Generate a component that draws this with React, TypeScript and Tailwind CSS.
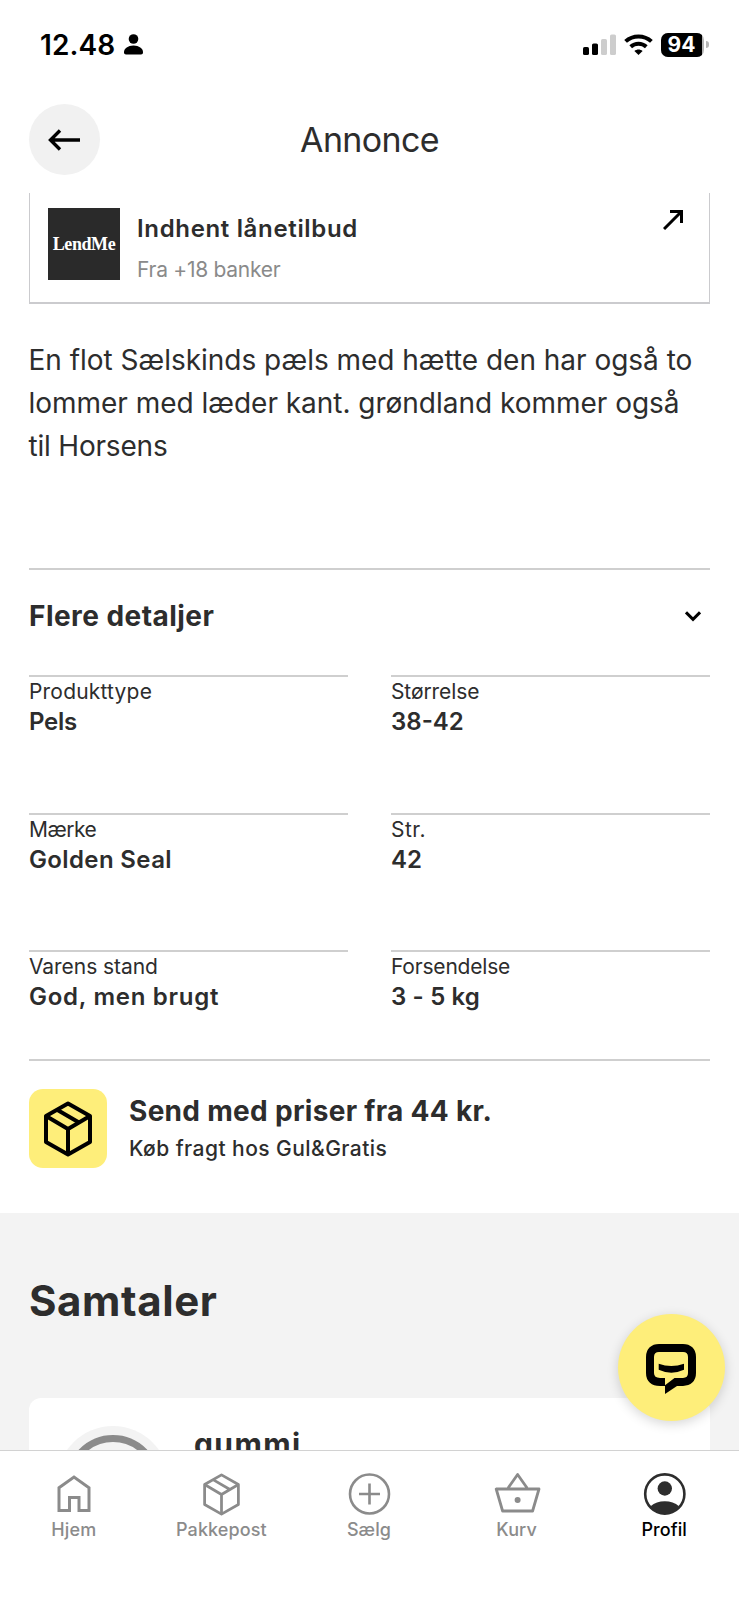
import type { ReactNode } from 'react'

type Detail = { label: string; value: string; labelClass: string; valueClass: string }

const details: Detail[] = [
  { label: 'Produkttype', value: 'Pels', labelClass: 'tracking-[0.2px]', valueClass: 'tracking-[-0.3px]' },
  { label: 'Størrelse', value: '38-42', labelClass: 'tracking-[-0.1px]', valueClass: 'tracking-[0px]' },
  { label: 'Mærke', value: 'Golden Seal', labelClass: 'tracking-[-0.5px]', valueClass: 'tracking-[0.37px]' },
  { label: 'Str.', value: '42', labelClass: 'tracking-[0.5px]', valueClass: 'tracking-[0px]' },
  { label: 'Varens stand', value: 'God, men brugt', labelClass: 'tracking-[-0.05px]', valueClass: 'tracking-[0.73px]' },
  { label: 'Forsendelse', value: '3 - 5 kg', labelClass: 'tracking-[-0.2px]', valueClass: 'tracking-[0.15px]' },
]

function StatusBar() {
  return (
    <div className="flex h-[88px] shrink-0 items-center pl-10 pr-[30px] pt-[1px] text-black">
      <span className="w-[84px] text-[28px] font-semibold leading-8 tracking-[0.1px]">12.48</span>
      <svg width="19" height="21" viewBox="0 0 19 21" fill="currentColor">
        <circle cx="9.5" cy="5" r="4.8" />
        <path d="M0 18.2C0 14.6 4 11.6 9.5 11.6S19 14.6 19 18.2C19 19.8 18.2 20.4 17 20.4H2C.8 20.4 0 19.8 0 18.2Z" />
      </svg>
      <svg className="ml-auto" width="33" height="22" viewBox="0 0 33 22">
        <rect x="0" y="13" width="6" height="8" rx="1.6" />
        <rect x="9" y="9.5" width="6" height="11.5" rx="1.6" />
        <rect x="18" y="5" width="6" height="16" rx="1.6" fill="#cdcdcd" />
        <rect x="27" y="0.5" width="6" height="20.5" rx="1.6" fill="#cdcdcd" />
      </svg>
      <svg className="ml-2" width="29" height="22" viewBox="0 0 29 22" fill="none" stroke="currentColor" strokeWidth="4">
        <path d="M1.6 7.4C8.9.7 20.1.7 27.4 7.4" />
        <path d="M6.7 12.8C11.2 8.8 17.8 8.8 22.3 12.8" />
        <path d="M10.4 17C12.8 15 16.2 15 18.6 17L14.5 21Z" fill="currentColor" stroke="none" />
      </svg>
      <div className="ml-2 h-6 w-[43px] overflow-hidden rounded-[7px] bg-[#b5b5b5]">
        <div className="flex h-6 w-[41px] items-center justify-center bg-black text-[21px] font-bold leading-none text-white">94</div>
      </div>
      <div className="ml-[2px] h-[7px] w-[3px] rounded-r-full bg-[#b5b5b5]" />
    </div>
  )
}

function Header() {
  return (
    <header className="grid h-[105px] shrink-0 grid-cols-[71px_1fr_71px] items-start px-[29px] pt-4">
      <button className="flex h-[71px] w-[71px] items-center justify-center rounded-full bg-[#f1f1f1] pr-[1px]">
        <svg width="32" height="22" viewBox="0 0 32 22" fill="none" stroke="#000" strokeWidth="3.4">
          <path d="M32 11H2.5M12 1.5L2.5 11L12 20.5" />
        </svg>
      </button>
      <h1 className="pt-[15px] text-center text-[34px] leading-[42px] tracking-[-0.65px] text-[#2d2d2d]">Annonce</h1>
    </header>
  )
}

function BoxIcon({ size, stroke }: { size: number; stroke: number }) {
  return (
    <svg width={size} height={size} viewBox="0 0 56 56" fill="none" stroke="currentColor" strokeWidth={stroke} strokeLinejoin="round">
      <path d="M28 2.5L50 15V41L28 53.5L6 41V15L28 2.5Z" />
      <path d="M6 15L28 28L50 15M28 28V53.5M17.5 9L39 21.5" />
    </svg>
  )
}

function LoanCard() {
  return (
    <div className="mx-[29px] flex h-[111px] shrink-0 border-x-[1.5px] border-b-2 border-[#cbcbce] pl-[18px] pt-[15px]">
      <div className="flex h-[72px] w-[72px] items-center justify-center bg-[#2a2a2a]">
        <span className="font-['Liberation_Serif',serif] text-[18px] font-bold leading-none tracking-[-0.4px] text-white">LendMe</span>
      </div>
      <div className="ml-[17px] flex-1">
        <p className="mt-[7px] text-[24px] font-semibold leading-7 tracking-[0.66px] text-[#2d2d2d]">Indhent lånetilbud</p>
        <p className="mt-[15px] text-[21px] leading-6 tracking-[-0.28px] text-[#8a8a8a]">Fra +18 banker</p>
      </div>
      <svg className="mr-[26px] mt-[2px]" width="20" height="20" viewBox="0 0 20 20" fill="none" stroke="#000" strokeWidth="3">
        <path d="M1 19L18 2M7 1.5H18.5V13" />
      </svg>
    </div>
  )
}

function Details() {
  return (
    <section className="mx-[29px] mt-[100px] shrink-0 border-y-2 border-[#cfcfcf] text-[#2d2d2d]">
      <div className="flex h-[105px] items-start justify-between pr-[9px] pt-[28px]">
        <h2 className="text-[28px] font-bold leading-9 tracking-[0.45px]">Flere detaljer</h2>
        <svg className="mt-[13px]" width="16" height="11" viewBox="0 0 16 11" fill="none" stroke="#000" strokeWidth="3">
          <path d="M1 1.3L8 8.3L15 1.3" />
        </svg>
      </div>
      <dl className="grid h-[384px] auto-rows-[137.5px] grid-cols-2 gap-x-[43px]">
        {details.map((d) => (
          <div key={d.label} className="border-t-2 border-[#cfcfcf]">
            <dt className={`mt-[1px] text-[21px] leading-7 ${d.labelClass}`}>{d.label}</dt>
            <dd className={`text-[24px] font-semibold leading-8 ${d.valueClass}`}>{d.value}</dd>
          </div>
        ))}
      </dl>
    </section>
  )
}

function Shipping() {
  return (
    <section className="flex h-[152px] shrink-0 px-[29px] pt-7 text-[#2d2d2d]">
      <div className="flex h-[79px] w-[78px] items-center justify-center rounded-[14px] bg-[#feee7a] text-black">
        <BoxIcon size={56} stroke={4} />
      </div>
      <div className="ml-[22px]">
        <h2 className="mt-[4px] text-[28px] font-bold leading-9 tracking-[0.3px]">Send med priser fra 44 kr.</h2>
        <p className="mt-[6px] text-[21px] font-medium leading-7 tracking-[0.45px]">Køb fragt hos Gul&amp;Gratis</p>
      </div>
    </section>
  )
}

function Conversations() {
  return (
    <section className="h-[237px] shrink-0 overflow-hidden bg-[#f3f3f3] px-[29px] text-[#2d2d2d]">
      <h2 className="pt-[61px] text-[42px] font-bold leading-[54px] tracking-[0.6px]">Samtaler</h2>
      <div className="mt-[70px] flex h-[160px] rounded-xl bg-white pl-7 pt-[28px]">
        <div className="flex h-[112px] w-[112px] items-center justify-center rounded-full bg-[#f3f3f3]">
          <div className="h-[94px] w-[94px] rounded-full border-[7px] border-[#8b8b8b] bg-[#f3f3f3]" />
        </div>
        <p className="ml-[25px] text-[30px] font-bold leading-9 tracking-[1.4px]">gummi</p>
      </div>
    </section>
  )
}

function ChatButton() {
  return (
    <button className="absolute right-[14px] top-[1314px] flex h-[107px] w-[107px] items-center justify-center rounded-full bg-[#feee7a] pr-[2px] pt-[2px] shadow-[0_3px_12px_rgba(0,0,0,0.16)]">
      <svg width="50" height="50" viewBox="0 0 50 50" fill="none" stroke="#000">
        <path d="M19 37.9H14C7.5 37.9 4 35 4 29V13C4 7 7.5 4 13 4H37C42.5 4 46 7 46 13V29C46 35 42.5 37.9 37 37.9H31" strokeWidth="8" />
        <path d="M19 41.2L28.5 33.9H34V41.9H31L19 50Z" fill="#000" stroke="none" />
        <path d="M12.7 19.7Q25.3 24.3 38 19.7V25.7Q25.3 31.6 12.7 25.7Z" fill="#000" stroke="none" />
      </svg>
    </button>
  )
}

function NavItem({ label, active, children }: { label: string; active?: boolean; children: ReactNode }) {
  return (
    <a className={`flex flex-col items-center ${active ? 'text-black' : 'text-[#8b8b8b]'}`}>
      <div className="flex h-[46px] items-center">{children}</div>
      <span className="mt-[1px] text-[18px] font-medium leading-6 tracking-[0.1px]">{label}</span>
    </a>
  )
}

function BottomNav() {
  return (
    <nav className="grid h-[150px] shrink-0 grid-cols-5 border-t border-[#d2d2d2] bg-white pr-[1px] pt-5">
      <NavItem label="Hjem">
        <svg width="46" height="46" viewBox="0 0 46 46" fill="none" stroke="currentColor" strokeWidth="3">
          <path d="M8 16.8L23 6L38 16.8V39.5H28V26.5H18.5V39.5H8Z" />
        </svg>
      </NavItem>
      <NavItem label="Pakkepost">
        <BoxIcon size={43} stroke={3.6} />
      </NavItem>
      <NavItem label="Sælg">
        <svg width="46" height="46" viewBox="0 0 46 46" fill="none" stroke="currentColor" strokeWidth="2.6">
          <circle cx="23.5" cy="23" r="19.5" />
          <path d="M23.5 12.5V33.5M13 23H34" />
        </svg>
      </NavItem>
      <NavItem label="Kurv">
        <svg width="48" height="46" viewBox="0 0 48 46" fill="none" stroke="currentColor" strokeWidth="2.8" strokeLinejoin="round">
          <path d="M3.2 18H46L39.6 40H9.600L3.200 18ZM15.100 17L24.600 3.500L34.100 17" />
          <circle cx="24.6" cy="29" r="3" fill="currentColor" stroke="none" />
        </svg>
      </NavItem>
      <NavItem label="Profil" active>
        <svg width="46" height="46" viewBox="-0.8 -0.5 46 46" fill="#2d2d2d">
          <circle cx="23" cy="22.5" r="19.6" fill="none" stroke="#2d2d2d" strokeWidth="2.6" />
          <circle cx="23" cy="17" r="7.2" />
          <path d="M8.8 34.8C12.5 31.5 17.5 29.8 23 29.8S33.5 31.5 37.2 34.8C33.8 39.7 28.5 42.5 23 42.5S12.2 39.7 8.8 34.8Z" />
        </svg>
      </NavItem>
    </nav>
  )
}

export default function App() {
  return (
    <div className="relative flex h-[1600px] w-[739px] flex-col overflow-hidden bg-white font-[Inter,'Liberation_Sans',sans-serif]">
      <StatusBar />
      <Header />
      <LoanCard />
      <p className="ml-[28.5px] mt-[35px] shrink-0 text-[28px] leading-[43px] text-[#2d2d2d]">
        <span className="tracking-[-0.02px]">En flot Sælskinds pæls med hætte den har også to</span>
        <br />
        <span className="tracking-[-0.02px]">lommer med læder kant. grøndland kommer også</span>
        <br />
        <span className="tracking-[-0.2px]">til Horsens</span>
      </p>
      <Details />
      <Shipping />
      <Conversations />
      <BottomNav />
      <ChatButton />
    </div>
  )
}
